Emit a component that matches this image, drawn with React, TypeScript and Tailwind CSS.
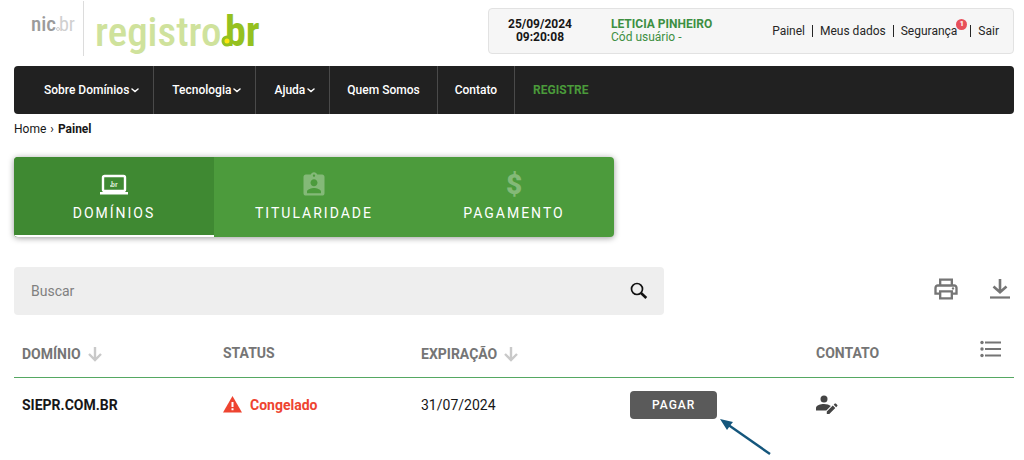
import { useState } from 'react'
import { MdAssignmentInd, MdOutlineLocalPrintshop } from 'react-icons/md'

const menu = [
  { label: 'Sobre Domínios', dropdown: true },
  { label: 'Tecnologia', dropdown: true },
  { label: 'Ajuda', dropdown: true },
  { label: 'Quem Somos', dropdown: false },
  { label: 'Contato', dropdown: false },
]

const domains = [
  { name: 'SIEPR.COM.BR', status: 'Congelado', expiration: '31/07/2024' },
]

const Logo = () => (
  <a href="/" aria-label="Registro.br" className="ml-4 block">
    <svg width="250" height="58" viewBox="0 0 250 58">
      <g fontFamily="'Roboto Condensed', 'Liberation Sans Narrow', sans-serif">
        <text x="1" y="31" fontSize="21" fontWeight="500" fill="#9b9b9b">
          nic
        </text>
        <text x="29" y="31" fontSize="20" fill="#d0d0d0">
          br
        </text>
        <text x="65" y="46" fontSize="41" fontWeight="500" fill="#cfe29c">
          registro
        </text>
        <text x="195" y="46" fontSize="42" fontWeight="700" fill="#95c11f">
          br
        </text>
      </g>
      <circle cx="28" cy="29" r="1.500" fill="#fff" stroke="#d0d0d0" />
      <path d="M53.500 1v55" stroke="#dcdcdc" />
      <circle cx="197" cy="41" r="4" fill="#ffe512" stroke="#95c11f" strokeWidth="3" />
    </svg>
  </a>
)

const Chevron = () => (
  <svg width="8" height="5" viewBox="0 0 8 5" fill="none" className="ml-0.5">
    <path d="M1 1l3 2.500L7 1" stroke="#fff" strokeWidth="1.500" strokeLinecap="round" />
  </svg>
)

const SortArrow = () => (
  <svg width="14" height="15" viewBox="0 0 14 15" fill="none" className="ml-[7px]">
    <path d="M7 0v13M1 7l6 6 6-6" stroke="#c9c9c9" strokeWidth="2.400" />
  </svg>
)

const LaptopIcon = () => (
  <svg width="30" height="22" viewBox="0 0 30 22">
    <rect x="4" y="2" width="22" height="15" rx="1.500" fill="none" stroke="#fff" strokeWidth="2.400" />
    <path d="M1 18h28v2.500H1z" fill="#fff" />
    <text
      x="12"
      y="13"
      fontSize="8"
      fontWeight="700"
      fontFamily="'Roboto Condensed', sans-serif"
      fill="#cfe3cb"
      className="tracking-normal"
    >
      br
    </text>
    <circle cx="12" cy="12" r="1" fill="#cfe3cb" />
  </svg>
)

const WarningIcon = () => (
  <svg width="19" height="17" viewBox="0 0 19 17">
    <path d="M9.500 0L19 16.500H0z" fill="#ee4430" />
    <path d="M8.500 6h2v5h-2zM8.500 12.300h2v2h-2z" fill="#fff" />
  </svg>
)

const SearchIcon = () => (
  <svg width="18" height="18" viewBox="0 0 18 18" fill="none" stroke="#111">
    <circle cx="7" cy="7" r="5.500" strokeWidth="1.700" />
    <path d="M11 11l5.300 5" strokeWidth="2.600" />
  </svg>
)

const DownloadIcon = () => (
  <svg width="20" height="22" viewBox="0 0 20 22" fill="none" stroke="#757575">
    <path d="M10 1v13M3.500 8.500l6.500 5.800 6.500-5.800" strokeWidth="2.600" />
    <path d="M0 19.500h20" strokeWidth="2.200" />
  </svg>
)

const ListIcon = () => (
  <svg width="22" height="18" viewBox="0 0 22 18" fill="#757575">
    <circle cx="2" cy="2.500" r="1.700" />
    <circle cx="2" cy="9" r="1.700" />
    <circle cx="2" cy="15.500" r="1.700" />
    <path d="M5 1.500h16v2H5zM5 8h16v2H5zM5 14.500h16v2H5z" />
  </svg>
)

const EditContactIcon = () => (
  <svg width="22" height="20" viewBox="0 0 22 20" fill="#444">
    <circle cx="8" cy="4" r="3.500" />
    <path d="M0 15.500v-2.700C0 10.300 4.600 9 8 9c2.600 0 5.300.8 6.800 2.100L10.300 15.500z" />
    <path d="M10.800 16.600l6-6 2.500 2.500-6 6h-2.500zM17.700 9.700l1.100-1.100c.3-.3.800-.3 1.100 0l1.400 1.400c.3.300.3.800 0 1.100l-1.100 1.100z" />
  </svg>
)

const Divider = () => <span className="mx-[7px] h-3 w-px bg-neutral-800" />

const Header = () => (
  <header className="flex items-start justify-between">
    <Logo />
    <div className="mt-2 flex h-[46px] w-[526px] items-center rounded-sm border border-[#e2e2e2] bg-[#f6f6f6] pr-3.5 pl-[18px] text-xs">
      <div className="w-[66px] text-center leading-[13px] font-bold text-neutral-900">
        <p>25/09/2024</p>
        <p>09:20:08</p>
      </div>
      <div className="ml-[38px] leading-[13px] text-[#3d8f42]">
        <p className="font-bold">LETICIA PINHEIRO</p>
        <p>Cód usuário -</p>
      </div>
      <nav className="ml-auto flex items-center text-neutral-800">
        <a href="/painel">Painel</a>
        <Divider />
        <a href="/dados">Meus dados</a>
        <Divider />
        <a href="/seguranca" className="relative mr-1.5">
          Segurança
          <span className="absolute -top-1 left-full -ml-px flex size-[11px] items-center justify-center rounded-full bg-[#e8505b] text-[8px] font-bold text-white">
            1
          </span>
        </a>
        <Divider />
        <a href="/sair">Sair</a>
      </nav>
    </div>
  </header>
)

const MainMenu = () => (
  <nav className="mt-2 flex h-12 rounded-sm bg-[#212121] pl-3 text-xs font-medium text-white">
    {menu.map((item) =>
      item.dropdown ? (
        <button
          key={item.label}
          type="button"
          className="flex items-center border-r border-[#4a4a4a] pr-3.5 pl-[18px]"
        >
          {item.label}
          <Chevron />
        </button>
      ) : (
        <a
          key={item.label}
          href="/"
          className="flex items-center border-r border-[#4a4a4a] px-[17px]"
        >
          {item.label}
        </a>
      )
    )}
    <a href="/registre" className="flex items-center px-[18px] font-bold text-[#4a9a3a]">
      REGISTRE
    </a>
  </nav>
)

const tabs = [
  { label: 'DOMÍNIOS', icon: <LaptopIcon /> },
  {
    label: 'TITULARIDADE',
    icon: <MdAssignmentInd size={28} className="text-[#84b978]" />,
  },
  {
    label: 'PAGAMENTO',
    icon: (
      <span className="text-[28px] leading-7 font-black tracking-normal text-[#84b978]">
        $
      </span>
    ),
  },
]

const App = () => {
  const [tab, setTab] = useState('DOMÍNIOS')
  const [search, setSearch] = useState('')

  const rows = domains.filter((d) =>
    d.name.toLowerCase().includes(search.toLowerCase())
  )

  return (
    <div className="min-h-screen bg-white pr-2.5 pl-3.5 font-['Roboto','Liberation_Sans',sans-serif] text-neutral-900">
      <Header />
      <MainMenu />

      <p className="mt-[7px] text-xs leading-4">
        <a href="/">Home</a> <span className="mx-px">›</span> <b>Painel</b>
      </p>

      <div className="mt-5 flex h-20 max-w-[600px] overflow-hidden rounded-sm bg-[#4c9b3c] shadow-[0_1px_6px_rgba(0,0,0,0.4)]">
        {tabs.map((t) => (
          <button
            key={t.label}
            type="button"
            onClick={() => setTab(t.label)}
            className={`flex flex-1 flex-col items-center border-b-2 pt-3.5 text-sm leading-5 tracking-[2px] text-white ${
              tab === t.label
                ? 'border-white bg-[#3f8932]'
                : 'border-transparent'
            }`}
          >
            <span className="mb-1 flex h-7 items-center">{t.icon}</span>
            {t.label}
          </button>
        ))}
      </div>

      <div className="mt-[30px] flex items-center justify-between">
        <div className="flex h-12 w-[650px] items-center rounded-sm bg-[#eee] pr-4 pl-[17px]">
          <input
            type="text"
            aria-label="Buscar"
            placeholder="Buscar"
            className="flex-1 bg-transparent text-sm outline-none placeholder:text-[#808080]"
            value={search}
            onChange={(e) => setSearch(e.target.value)}
          />
          <button type="button" aria-label="Pesquisar">
            <SearchIcon />
          </button>
        </div>
        <div className="flex items-center gap-[30px] pr-1 pb-1">
          <button type="button" aria-label="Imprimir">
            <MdOutlineLocalPrintshop size={28} className="text-[#757575]" />
          </button>
          <button type="button" aria-label="Baixar">
            <DownloadIcon />
          </button>
        </div>
      </div>

      <table className="mt-[14px] w-full table-fixed border-separate border-spacing-0 text-left text-sm">
        <thead>
          <tr className="h-[49px] text-[#757575] *:border-b *:border-solid *:border-b-[#55a862]">
            <th className="w-[201px] px-2 font-bold">
              <span className="mt-0.5 flex items-center">
                DOMÍNIO <SortArrow />
              </span>
            </th>
            <th className="w-[198px] px-2 font-bold">STATUS</th>
            <th className="w-[209px] px-2 font-bold">
              <span className="mt-0.5 flex items-center">
                EXPIRAÇÃO <SortArrow />
              </span>
            </th>
            <th className="w-[186px]" />
            <th className="w-[164px] px-2 font-bold">CONTATO</th>
            <th className="px-2 pb-2">
              <button type="button" aria-label="Colunas" className="block">
                <ListIcon />
              </button>
            </th>
          </tr>
        </thead>
        <tbody>
          {rows.map((d) => (
            <tr key={d.name} className="h-[53px]">
              <td className="px-2 font-bold">{d.name}</td>
              <td className="px-2 font-bold text-[#ee4430]">
                <span className="flex items-center gap-2">
                  <WarningIcon />
                  {d.status}
                </span>
              </td>
              <td className="px-2">{d.expiration}</td>
              <td className="px-2">
                <div className="relative w-fit">
                  <button
                    type="button"
                    className="block h-7 rounded-sm bg-[#5a5a5a] px-[22px] text-xs font-medium tracking-[1px] text-white"
                  >
                    PAGAR
                  </button>
                  <svg
                    width="52"
                    height="37"
                    viewBox="0 0 52 37"
                    className="absolute top-full left-full ml-[3px] max-w-none"
                  >
                    <path d="M7 5l43 30" stroke="#14567c" strokeWidth="2.400" />
                    <path d="M0 0l13 3-2.500 3-3.500 5z" fill="#14567c" />
                  </svg>
                </div>
              </td>
              <td className="px-2">
                <button type="button" aria-label="Editar contato" className="block">
                  <EditContactIcon />
                </button>
              </td>
              <td />
            </tr>
          ))}
        </tbody>
      </table>
    </div>
  )
}

export default App
